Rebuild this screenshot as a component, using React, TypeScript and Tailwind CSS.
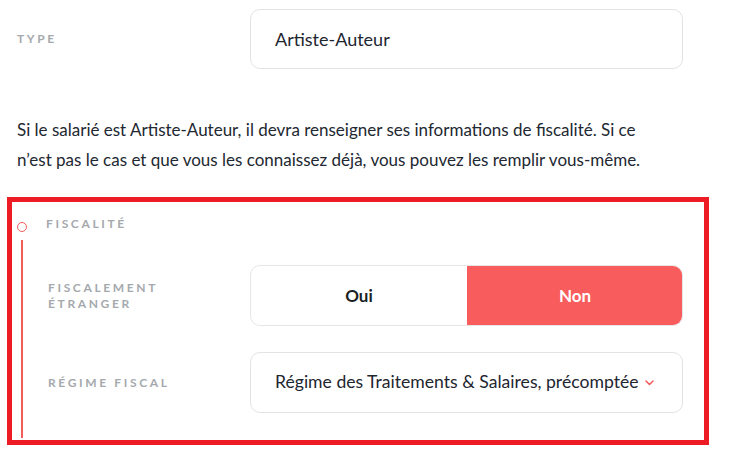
import React from 'react';

const labelClass =
  "text-[12px] font-bold uppercase tracking-[0.22em] leading-[16px] text-[#a5a9ad]";

export default function App() {
  return (
    <div className="h-[452px] w-[734px] bg-white font-['Lato','Noto_Sans',sans-serif] text-[#1e2630]">
      {/* Type row */}
      <div className="flex items-center pt-[9px] pl-[17px]">
        <div className={`w-[233px] ${labelClass}`}>Type</div>
        <div className="flex h-[60px] w-[433px] items-center rounded-[10px] border border-[#e3e3e3] px-[24px] text-[18px]">
          Artiste-Auteur
        </div>
      </div>

      {/* Info text */}
      <p className="mt-[46px] pl-[17px] text-[17px] leading-[30px] text-[#222831]">
        Si le salarié est Artiste-Auteur, il devra renseigner ses informations de fiscalité. Si ce
        <br />
        n’est pas le cas et que vous les connaissez déjà, vous pouvez les remplir vous-même.
      </p>

      {/* Highlighted fiscal section */}
      <div className="mt-[22px] ml-[7px] flex h-[248px] w-[702px] border-[5px] border-[#ed1c24]">
        <div className="ml-[5px] flex w-[10px] flex-col items-center pt-[20px] pb-[2px]">
          <div className="h-[10px] w-[10px] rounded-full border-[1.5px] border-[#f45b5b]" />
          <div className="mt-[8px] w-[2px] flex-1 bg-[#f45b5b]" />
        </div>

        <div className="ml-[19px] flex-1 pt-[14px]">
          <div className={labelClass}>Fiscalité</div>

          <div className="mt-[33px] flex items-center pl-[2px]">
            <div className={`w-[202px] ${labelClass}`}>
              Fiscalement
              <br />
              Étranger
            </div>
            <div className="flex h-[61px] w-[433px] overflow-hidden rounded-[10px] border border-[#e6e6e6] text-[17px] font-bold">
              <button className="flex flex-1 items-center justify-center text-[#1b1f24]">Oui</button>
              <button className="-my-px -mr-px flex flex-1 items-center justify-center bg-[#f85c5c] text-white">
                Non
              </button>
            </div>
          </div>

          <div className="mt-[26px] flex items-center pl-[2px]">
            <div className={`w-[202px] ${labelClass}`}>Régime fiscal</div>
            <div className="flex h-[61px] w-[433px] items-center rounded-[10px] border border-[#e3e3e3] pl-[24px] pr-[28px] text-[17.6px]">
              <span className="w-[367px] overflow-hidden whitespace-nowrap">
                Régime des Traitements &amp; Salaires, précomptée à la source
              </span>
              <svg className="ml-[3px]" width="9" height="6" viewBox="0 0 9 6" fill="none">
                <path d="M1 1l3.5 3.5L8 1" stroke="#f45b5b" strokeWidth="1.5" strokeLinecap="round" strokeLinejoin="round" />
              </svg>
            </div>
          </div>
        </div>
      </div>
    </div>
  );
}
